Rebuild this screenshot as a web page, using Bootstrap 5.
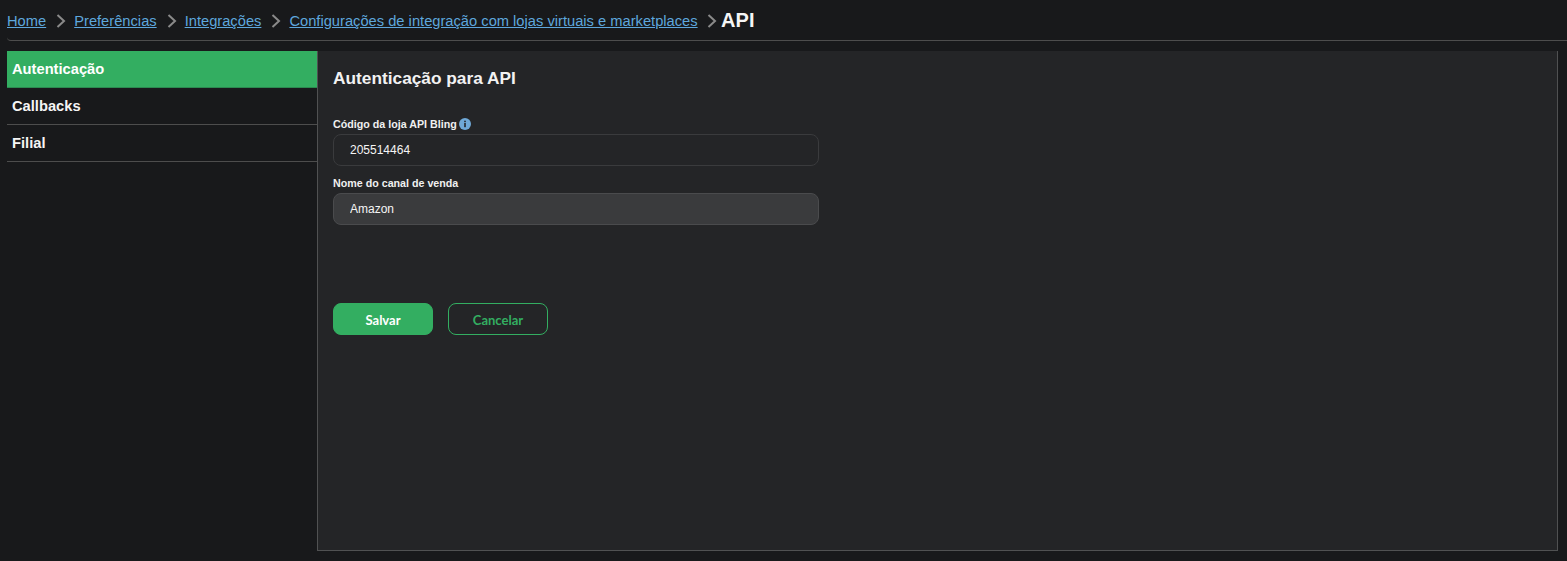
<!DOCTYPE html>
<html lang="pt-BR">
<head>
  <meta charset="UTF-8" />
  <title>API</title>
  <meta name="viewport" content="width=device-width, initial-scale=1" />
  <link href="https://cdn.jsdelivr.net/npm/bootstrap@5.3.0/dist/css/bootstrap.min.css" rel="stylesheet" />
  <style>
    body {
      font-family: "Liberation Sans", Arial, sans-serif;
      background: #18191b;
      color: #f2f2f2;
      height: 561px;
      overflow: hidden;
    }

    .top-crumbs {
      height: 41px;
      margin-left: 7px;
      border-bottom: 1px solid #4d4d4d;
      border-bottom-left-radius: 4px;
      font-size: 14.7px;
      line-height: 20px;
      padding-top: 2px;
    }

    .top-crumbs a {
      color: #5ea7dd;
      text-decoration: underline;
    }

    .crumb-arrow {
      width: 28px;
      flex: none;
      padding-left: 2px;
    }

    .crumb-arrow.is-last {
      width: 23.500px;
      padding-left: 5px;
    }

    .crumb-now {
      font-size: 20px;
      font-weight: 700;
      color: #f5f5f5;
      line-height: 20px;
      margin-top: -2px;
    }

    .main-area {
      padding: 10px 9px 10px 7px;
      height: 520px;
    }

    .side-menu {
      width: 310px;
      flex: none;
    }

    .side-item {
      display: block;
      height: 37px;
      line-height: 37px;
      padding-left: 5px;
      font-size: 14.7px;
      font-weight: 700;
      color: #f5f5f5;
      text-decoration: none;
      border-bottom: 1px solid #4d4d4d;
    }

    .side-item.is-on {
      background: #33ae61;
      color: #fff;
      border-bottom-color: #2b8a50;
    }

    .content-panel {
      background: #242527;
      border: 1px solid #505152;
      border-top: 0;
      padding: 17px 15px 18px;
    }

    .panel-title {
      font-size: 17.3px;
      font-weight: 700;
      line-height: 20px;
      margin: 0 0 29px;
      color: #f2f2f2;
    }

    .field-wrap {
      width: 486px;
    }

    .field-label {
      font-size: 10.7px;
      font-weight: 700;
      line-height: 14px;
      margin-bottom: 3px;
      color: #f0f0f0;
      column-gap: 2px;
    }

    .field-input {
      display: block;
      width: 100%;
      height: 32px;
      background: #242527;
      border: 1px solid #3a3b3d;
      border-radius: 8px;
      color: #f5f5f5;
      font-size: 12px;
      padding: 0 16px;
      margin-bottom: 10px;
    }

    .field-input:disabled {
      background: #3a3b3d;
      border-color: #4a4b4d;
      color: #f5f5f5;
      opacity: 1;
    }

    .form-actions {
      margin-top: 78px;
      gap: 15px;
    }

    .act-btn {
      width: 100px;
      height: 32px;
      padding: 2px 0 0;
      border-radius: 8px;
      font-family: Lato, sans-serif;
      font-size: 13px;
      font-weight: 700;
      line-height: 28px;
    }

    .act-save {
      background: #33ae61;
      border: 1px solid #33ae61;
      color: #fff;
    }

    .act-cancel {
      background: transparent;
      border: 1px solid #33ae61;
      color: #33ae61;
    }
  </style>
</head>
<body>

<nav class="top-crumbs d-flex align-items-center">
  <a href="#">Home</a>
  <span class="crumb-arrow d-flex justify-content-center">
    <svg width="10" height="14" viewBox="0 0 10 14"><path d="M1.500 1 8 7l-6.500 6" fill="none" stroke="#8a8a8a" stroke-width="2"/></svg>
  </span>
  <a href="#">Preferências</a>
  <span class="crumb-arrow d-flex justify-content-center">
    <svg width="10" height="14" viewBox="0 0 10 14"><path d="M1.500 1 8 7l-6.500 6" fill="none" stroke="#8a8a8a" stroke-width="2"/></svg>
  </span>
  <a href="#">Integrações</a>
  <span class="crumb-arrow d-flex justify-content-center">
    <svg width="10" height="14" viewBox="0 0 10 14"><path d="M1.500 1 8 7l-6.500 6" fill="none" stroke="#8a8a8a" stroke-width="2"/></svg>
  </span>
  <a href="#">Configurações de integração com lojas virtuais e marketplaces</a>
  <span class="crumb-arrow is-last d-flex justify-content-center">
    <svg width="10" height="14" viewBox="0 0 10 14"><path d="M1.500 1 8 7l-6.500 6" fill="none" stroke="#8a8a8a" stroke-width="2"/></svg>
  </span>
  <span class="crumb-now">API</span>
</nav>

<div class="main-area d-flex">
  <div class="side-menu">
    <a class="side-item is-on" href="#">Autenticação</a>
    <a class="side-item" href="#">Callbacks</a>
    <a class="side-item" href="#">Filial</a>
  </div>

  <div class="content-panel flex-grow-1">
    <h5 class="panel-title">Autenticação para API</h5>

    <div class="field-wrap">
      <div class="field-label d-flex align-items-center">
        Código da loja API Bling
        <svg width="12" height="12" viewBox="0 0 12 12"><circle cx="6" cy="6" r="6" fill="#6fa8d6"/><rect x="5.200" y="5" width="1.600" height="4.200" fill="#242527"/><rect x="5.200" y="2.700" width="1.600" height="1.500" fill="#242527"/></svg>
      </div>
      <input class="field-input" type="text" value="205514464" />

      <div class="field-label">Nome do canal de venda</div>
      <input class="field-input" type="text" value="Amazon" disabled />
    </div>

    <div class="form-actions d-flex">
      <button class="btn act-btn act-save" type="button">Salvar</button>
      <button class="btn act-btn act-cancel" type="button">Cancelar</button>
    </div>
  </div>
</div>

<script src="https://cdn.jsdelivr.net/npm/bootstrap@5.3.0/dist/js/bootstrap.bundle.min.js"></script>
</body>
</html>
